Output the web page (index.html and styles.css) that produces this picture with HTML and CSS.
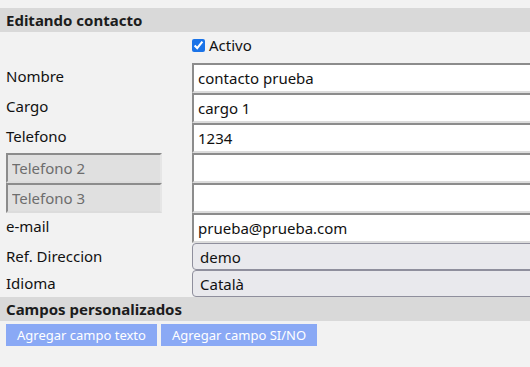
FILE: index.html
```html
<!DOCTYPE html>
<html lang="es">
  <head>
    <meta charset="UTF-8" />
    <title>Editando contacto</title>
    <link rel="stylesheet" href="styles.css">
  </head>
  <body>
    <h2 class="titulo">Editando contacto</h2>
    <div class="fila fila-check">
      <span></span>
      <label class="activo"><input type="checkbox" checked /> Activo</label>
    </div>
    <div class="fila">
      <label class="etiqueta">Nombre</label>
      <input class="campo" type="text" value="contacto prueba" />
    </div>
    <div class="fila">
      <label class="etiqueta">Cargo</label>
      <input class="campo" type="text" value="cargo 1" />
    </div>
    <div class="fila">
      <label class="etiqueta">Telefono</label>
      <input class="campo" type="text" value="1234" />
    </div>
    <div class="fila">
      <input class="campo-off" type="text" value="Telefono 2" disabled />
      <input class="campo" type="text" value="" />
    </div>
    <div class="fila">
      <input class="campo-off" type="text" value="Telefono 3" disabled />
      <input class="campo" type="text" value="" />
    </div>
    <div class="fila">
      <label class="etiqueta">e-mail</label>
      <input class="campo" type="text" value="prueba@prueba.com" />
    </div>
    <div class="fila fila-sel">
      <label class="etiqueta">Ref. Direccion</label>
      <select class="lista"><option>demo</option></select>
    </div>
    <div class="fila fila-sel">
      <label class="etiqueta">Idioma</label>
      <select class="lista"><option>Català</option></select>
    </div>
    <h2 class="titulo">Campos personalizados</h2>
    <div class="botones">
      <button class="boton">Agregar campo texto</button>
      <button class="boton">Agregar campo SI/NO</button>
    </div>
  </body>
</html>
```

FILE: styles.css
```css
body {
  margin: 8px 0 0;
  background-color: #f2f2f2;
  font-family: "Noto Sans", "Open Sans", sans-serif;
  font-size: 15px;
  color: #111;
  overflow: hidden;
}

.titulo {
  margin: 0;
  height: 24px;
  line-height: 24px;
  padding-left: 6px;
  background-color: #d9d9d9;
  font-size: 15px;
  font-weight: bold;
  color: #1c1c1c;
}

.fila {
  display: grid;
  grid-template-columns: 186px 420px;
  height: 30px;
  padding-left: 6px;
}

.fila-check {
  height: 31px;
}

.fila-sel {
  height: 27px;
}

.activo {
  display: flex;
  align-items: center;
  gap: 4px;
  height: 26px;
}

.activo input {
  margin: 0;
  width: 13px;
  height: 13px;
  accent-color: #1a73e8;
}

.etiqueta {
  line-height: 26px;
}

.campo,
.campo-off {
  box-sizing: border-box;
  height: 30px;
  margin: 0;
  padding: 0 4px;
  border: 2px solid #8c8c8c;
  border-right-color: #e6e6e6;
  border-bottom-color: #dcdcdc;
  background: white;
  font: inherit;
  color: #111;
}

.campo-off {
  width: 156px;
  background: #e0e0e0;
  color: #6d6d6d;
}

.lista {
  box-sizing: border-box;
  height: 27px;
  margin: 0;
  padding: 0 3px;
  border: 1px solid #8f8f9d;
  border-radius: 4px;
  background: #e9e9ed;
  font: inherit;
  color: #111;
}

.botones {
  display: flex;
  gap: 4px;
  padding: 3px 6px;
}

.boton {
  height: 22px;
  padding: 0 11px;
  border: none;
  background-color: #8aa9f5;
  color: white;
  font-family: inherit;
  font-size: 13px;
}
```
